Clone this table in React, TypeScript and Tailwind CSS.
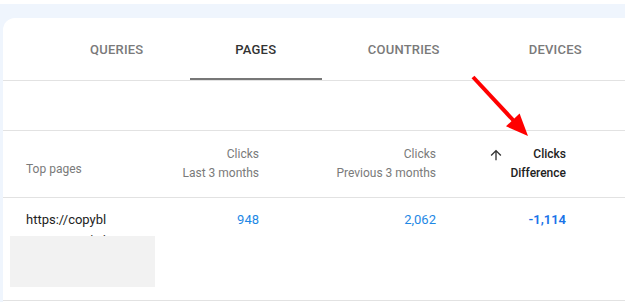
import React from 'react';

const tabs = [
  { label: 'QUERIES', w: 'w-[146px]' },
  { label: 'PAGES', w: 'w-[133px]', active: true },
  { label: 'COUNTRIES', w: 'w-[164px]' },
  { label: 'DEVICES', w: 'w-[140px]' },
];

const ArrowUp: React.FC = () => (
  <svg className="w-[16px] h-[16px]" viewBox="0 0 24 24" fill="#333">
    <path d="M4 12l1.41 1.41L11 7.83V20h2V7.83l5.58 5.59L20 12l-8-8-8 8z" />
  </svg>
);

const App: React.FC = () => {
  return (
    <div
      className="relative w-[630px] h-[308px] bg-white overflow-hidden pt-[4px]"
      style={{ fontFamily: 'Roboto, "Liberation Sans", sans-serif' }}
    >
      <div className="w-[625px] h-[298px] bg-[#eff5fd] pl-[3px] pt-[14px]">
        <div className="h-full bg-white rounded-tl-[12px] flex flex-col">
          {/* Tabs */}
          <div className="flex h-[63px] pl-[41px] border-b border-[#e2e2e2]">
            {tabs.map((t) => (
              <div
                key={t.label}
                className={`${t.w} relative flex items-center justify-center pt-[2px] text-[13px] font-medium tracking-[0.2px] ${
                  t.active ? 'text-[#333333]' : 'text-[#7a7a7a]'
                }`}
              >
                {t.label}
                {t.active && <div className="absolute left-0 right-0 bottom-0 h-[2px] bg-[#777777]"></div>}
              </div>
            ))}
          </div>

          <div className="h-[50px] border-b border-[#e2e2e2]"></div>

          {/* Header */}
          <div className="h-[67px] border-b border-[#e2e2e2] grid grid-cols-[129px_104px_177px_130px] pl-[23px] items-center text-[12px] leading-[19px]">
            <div className="text-[#7a7a7a] mt-[10px]">Top pages</div>
            <div className="text-right text-[#7a7a7a]">
              <div>Clicks</div>
              <div>Last 3 months</div>
            </div>
            <div className="text-right text-[#7a7a7a]">
              <div>Clicks</div>
              <div>Previous 3 months</div>
            </div>
            <div className="flex justify-end text-[#222222] font-medium">
              <div className="pt-[2px] pr-[6px]">
                <ArrowUp />
              </div>
              <div className="text-right">
                <div>Clicks</div>
                <div>Difference</div>
              </div>
            </div>
          </div>

          {/* Row */}
          <div className="relative h-[103px] border-b border-[#e2e2e2] grid grid-cols-[129px_104px_177px_130px] pl-[23px] pt-[12px] items-start text-[13px] leading-[20px]">
            <div className="w-[82px] break-all text-[#222222]">https://copyblogger.com/wi</div>
            <div className="text-right text-[#1e88e5]">948</div>
            <div className="text-right text-[#1e88e5]">2,062</div>
            <div className="text-right text-[#1a73e8] font-semibold">-1,114</div>
            <div className="absolute left-[7px] top-[38px] w-[145px] h-[51px] bg-[#f2f2f2]"></div>
          </div>
        </div>
      </div>

      {/* Red annotation arrow */}
      <svg className="absolute left-0 top-0 w-[630px] h-[308px] pointer-events-none" viewBox="0 0 630 308">
        <line x1="473" y1="77" x2="514" y2="121" stroke="#ff0000" strokeWidth="4" />
        <polygon points="528,136 519.6,113.5 506,126.3" fill="#ff0000" />
      </svg>
    </div>
  );
};

export default App;
